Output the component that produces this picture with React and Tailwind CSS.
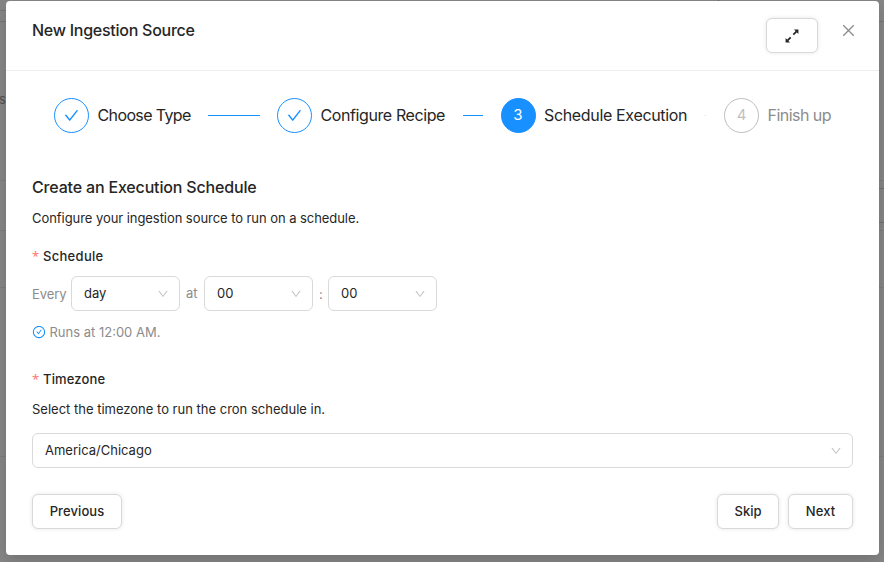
import React from "react";
import {
  AiOutlineCheck,
  AiOutlineCheckCircle,
  AiOutlineClose,
  AiOutlineDown,
} from "react-icons/ai";

function ExpandIcon() {
  return (
    <svg width="16" height="16" viewBox="0 0 16 16" fill="#262626" stroke="#262626">
      <path d="M9.3 6.7L12.6 3.4M6.7 9.3L3.4 12.6" strokeWidth="1.7" fill="none" />
      <path d="M10 1.6L14.4 1.6L14.4 6ZM6 14.4L1.6 14.4L1.6 10Z" stroke="none" />
    </svg>
  );
}

function Step({ children, label, state, width, labelClass }) {
  const circle =
    state === "active"
      ? "border-[#1890ff] bg-[#1890ff] text-white"
      : state === "done"
        ? "border-[#1890ff] text-[#1890ff]"
        : "border-[#bfbfbf] text-[#bfbfbf]";
  return (
    <div className={`flex h-[35px] shrink-0 items-center ${width}`}>
      <div className={`mr-2 flex size-[35px] shrink-0 items-center justify-center rounded-full border text-base ${circle}`}>
        {children}
      </div>
      <span className={`pb-px pl-[0.5px] whitespace-nowrap text-base ${state === "wait" ? "text-[#8c8c8c]" : "text-[#262626]"} ${labelClass}`}>
        {label}
      </span>
    </div>
  );
}

function Select({ value, className }) {
  return (
    <div className={`flex h-[35px] items-center justify-between rounded-md border border-[#d9d9d9] pr-[10.5px] pl-3 text-[#262626] ${className}`}>
      <span className="pb-px">{value}</span>
      <AiOutlineDown className="size-3 text-[#bfbfbf]" />
    </div>
  );
}

function Button({ children, className }) {
  return (
    <button className={`flex h-[35px] items-center justify-center rounded-md border border-[#d9d9d9] bg-white font-medium text-[#262626] shadow-[0_0_4px_rgba(0,0,0,0.1)] ${className}`}>
      {children}
    </button>
  );
}

function Label({ children, className }) {
  return (
    <div className="flex h-5 items-center font-medium text-[#262626]">
      <span className="w-[11px] font-['Noto_Sans',sans-serif] text-[13px] font-normal text-[#ff7875]">*</span>
      <span className={className}>{children}</span>
    </div>
  );
}

export default function App() {
  return (
    <div className="relative h-[562px] w-[884px] overflow-hidden bg-[#868686] font-['Inter',sans-serif] text-[13px] leading-5">
      <div className="absolute top-[10px] left-0 h-px w-[6px] bg-[#767676]" />
      <div className="absolute top-[21px] left-0 h-px w-full bg-[#767676]" />
      <div className="absolute top-[180px] left-0 h-px w-full bg-[#7c7c7c]" />
      <div className="absolute top-[188px] right-0 h-px w-[5px] bg-[#707070]" />
      <div className="absolute top-[222px] right-0 h-px w-[5px] bg-[#707070]" />
      <div className="absolute top-[230px] left-0 h-px w-full bg-[#7c7c7c]" />
      <div className="absolute top-[287px] left-0 h-px w-full bg-[#7c7c7c]" />
      <div className="absolute top-[456px] left-0 h-px w-full bg-[#7c7c7c]" />
      <div className="absolute top-0 left-[718px] h-px w-px bg-[#606060]" />
      <span className="absolute top-[89px] left-[-1px] text-[#505050]">s</span>

      <div className="absolute top-px left-[6px] h-[554px] w-[873px] rounded-[4px] bg-white shadow-[0_6px_16px_rgba(0,0,0,0.15)]">
        <header className="flex h-[70px] items-start border-b border-[#ededed] pl-[26px]">
          <h1 className="mt-[18px] w-[734px] text-base leading-[22px] font-medium tracking-[-0.26px] text-[#262626]">New Ingestion Source</h1>
          <Button className="mt-[17px] w-[52px]">
            <ExpandIcon />
          </Button>
          <AiOutlineClose className="mt-[21px] ml-[22px] size-[17px] text-[#8c8c8c]" />
        </header>

        <div className="flex h-[89px] items-center pl-12">
          <Step state="done" width="w-[154px]" label="Choose Type" labelClass="tracking-[-0.62px]">
            <AiOutlineCheck className="size-[17px]" />
          </Step>
          <div className="h-px w-[52px] bg-[#1890ff]" />
          <Step state="done" width="ml-[17px] w-[186px]" label="Configure Recipe" labelClass="tracking-[-0.4px]">
            <AiOutlineCheck className="size-[17px]" />
          </Step>
          <div className="h-px w-5 bg-[#1890ff]" />
          <Step state="active" width="ml-[17.5px] w-[203.5px]" label="Schedule Execution" labelClass="tracking-[-0.34px]">
            <span className="text-[15px]">3</span>
          </Step>
          <div className="h-px w-[2px] bg-[#f0f0f0]" />
          <Step state="wait" width="ml-[18px]" label="Finish up" labelClass="tracking-[-0.54px]">
            <span className="text-[15px]">4</span>
          </Step>
        </div>

        <section className="px-[26px] pt-4">
          <h2 className="text-base leading-[22px] font-medium tracking-[-0.17px] text-[#262626]">Create an Execution Schedule</h2>
          <p className="mt-[10px] tracking-[-0.06px] text-[#262626]">Configure your ingestion source to run on a schedule.</p>
          <div className="mt-[18px]">
            <Label className="tracking-[0.3px]">Schedule</Label>
          </div>
          <div className="mt-[10px] flex items-center text-[#8c8c8c]">
            <span className="w-[39px] pt-px tracking-[-0.1px]">Every</span>
            <Select value="day" className="w-[109px]" />
            <span className="w-6 pb-px pl-[6px]">at</span>
            <Select value="00" className="w-[109px]" />
            <span className="w-[15px] pl-[6px]">:</span>
            <Select value="00" className="w-[109px]" />
          </div>
          <div className="mt-[11px] flex items-center text-[#8c8c8c]">
            <AiOutlineCheckCircle className="-ml-[0.5px] mr-[4px] size-[14px] shrink-0 text-[#1890ff]" />
            <span>Runs at 12:00 AM.</span>
          </div>
          <div className="mt-[27px]">
            <Label className="tracking-[0.15px]">Timezone</Label>
          </div>
          <p className="mt-[10px] text-[#262626]">Select the timezone to run the cron schedule in.</p>
          <Select value="America/Chicago" className="mt-[14px] w-full" />
          <footer className="mt-[26px] flex">
            <Button className="w-[90px] pb-px tracking-[0.1px]">Previous</Button>
            <Button className="ml-auto w-[62px] pb-px">Skip</Button>
            <Button className="ml-[9px] w-[65px] pb-px tracking-[0.1px]">Next</Button>
          </footer>
        </section>
      </div>
    </div>
  );
}
